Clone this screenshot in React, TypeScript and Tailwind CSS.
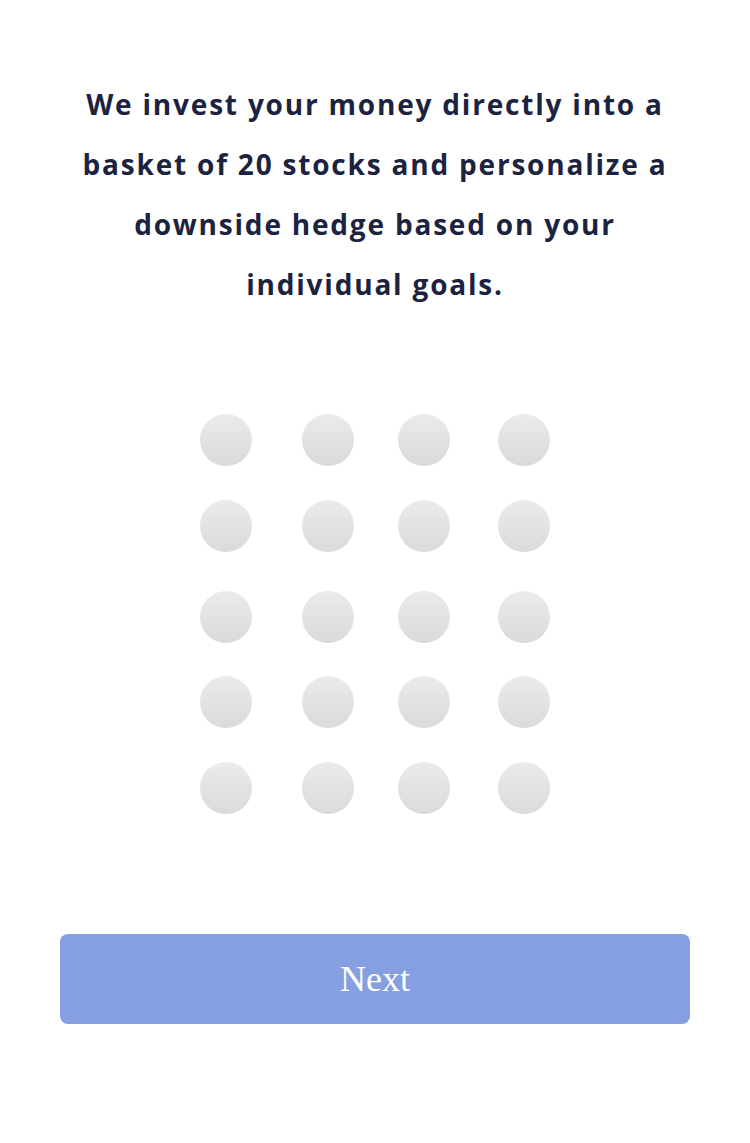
import React from 'react';

const colGaps = ['', 'ml-[50px]', 'ml-[44px]', 'ml-[48px]'];
const rowGaps = ['', 'mt-[34px]', 'mt-[39px]', 'mt-[33px]', 'mt-[34px]'];

const Dot: React.FC<{ className?: string }> = ({ className = '' }) => (
  <div className={`w-[52px] h-[52px] rounded-full bg-gradient-to-b from-[#ebebeb] to-[#dadada] ${className}`} />
);

const App: React.FC = () => {
  return (
    <div className="w-[750px] h-[1143px] bg-white flex flex-col items-center font-['Open_Sans',sans-serif]">
      {/* Intro copy */}
      <p className="mt-[74px] w-[720px] text-center text-[28px] leading-[60px] font-bold text-[#1c2340] tracking-[1.8px]">
        We invest your money directly into a
        <br />
        basket of 20 stocks and personalize a
        <br />
        downside hedge based on your
        <br />
        individual goals.
      </p>

      {/* 20 stocks */}
      <div className="mt-[100px] flex flex-col">
        {rowGaps.map((rg, r) => (
          <div key={r} className={`flex ${rg}`}>
            {colGaps.map((cg, c) => (
              <Dot key={c} className={cg} />
            ))}
          </div>
        ))}
      </div>

      {/* Next */}
      <button className="mt-[120px] w-[630px] h-[90px] rounded-lg bg-[#859fe0] text-white text-[36px] font-['Liberation_Serif',serif]">
        Next
      </button>
    </div>
  );
};

export default App;
